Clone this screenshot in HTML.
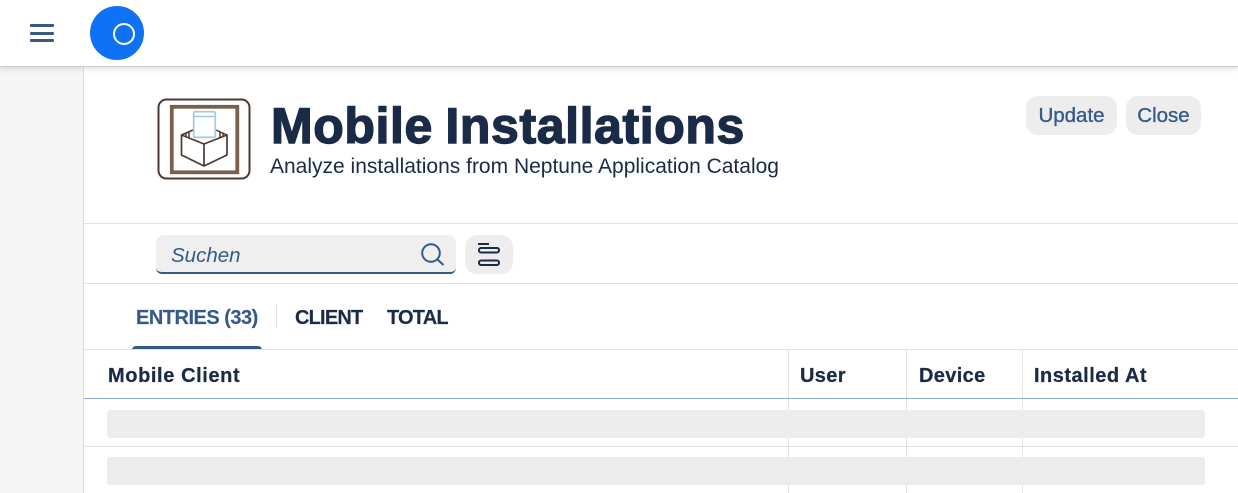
<!DOCTYPE html>
<html><head><meta charset="utf-8"><style>
html,body{margin:0;padding:0;width:1238px;height:493px;overflow:hidden;background:#fff}
body{position:relative;font-family:"Liberation Sans",sans-serif;color:#1a2b47}
.a{position:absolute}
.t{position:absolute;white-space:nowrap;line-height:1}
.l{position:absolute;background:#e2e2e2}
.btn{position:absolute;background:#ededed;border-radius:12px;color:#355a8a;font-size:20.500px;line-height:39px;text-align:center;top:96px;height:39px;-webkit-text-stroke:.35px #355a8a}
.sk{position:absolute;left:107px;width:1098px;height:28px;background:#ececec;border-radius:3px}
.h{font-size:20px;font-weight:700;-webkit-text-stroke:.25px #1a2b47}
.tab{font-size:20px;font-weight:700;top:308px;letter-spacing:-.8px;-webkit-text-stroke:.15px #1a2b47}
</style></head><body>
<div class="a" style="left:0;top:0;width:1238px;height:66px;background:#fff;border-bottom:1px solid #c9ced6;box-shadow:0 2px 5px rgba(120,130,145,.25);z-index:3"></div>
<div class="a" style="left:30px;top:24px;width:24px;height:3px;background:#355a8a;border-radius:1px;z-index:4"></div>
<div class="a" style="left:30px;top:32px;width:24px;height:3px;background:#355a8a;border-radius:1px;z-index:4"></div>
<div class="a" style="left:30px;top:39px;width:24px;height:3px;background:#355a8a;border-radius:1px;z-index:4"></div>
<div class="a" style="left:90px;top:6px;width:54px;height:54px;background:#0f72f5;border-radius:50%;z-index:4"></div>
<div class="a" style="left:113px;top:23px;width:18px;height:18px;border:2px solid #fff;border-radius:50%;z-index:5"></div>

<div class="a" style="left:0;top:67px;width:83px;height:426px;background:#f5f5f5;border-right:1px solid #dcdcdc"></div>

<svg class="a" style="left:157px;top:98px" width="94" height="82" viewBox="0 0 94 82">
<rect x="1.500" y="1.500" width="91" height="79" rx="8" fill="#fff" stroke="#4c3a32" stroke-width="2"/>
<rect x="14.800" y="8.800" width="65.500" height="65.500" fill="none" stroke="#7a604c" stroke-width="3.800"/>
<path d="M24.500 37 L36 32 M70 37 L59 32 M29 35 L29 40 M32 34 L32 41 M63 34 L63 41 M66 35 L66 40" stroke="#4c3a32" stroke-width="1.500" fill="none"/>
<path d="M24.500 37 L47 46 L70 37 L70 57 L47 68 L24.500 57 Z M47 46 L47 68" fill="#fff" stroke="#4c3a32" stroke-width="1.700" stroke-linejoin="round"/>
<rect x="36.700" y="13.700" width="21.600" height="25.600" rx="1.500" fill="#fbfdff" stroke="#a5c6e4" stroke-width="1.700"/>
<path d="M36.700 18.500 H58.300" stroke="#a5c6e4" stroke-width="1.400"/>
</svg>

<div class="t" style="left:271px;top:99px;font-size:50px;font-weight:700;letter-spacing:.6px;word-spacing:-2px;line-height:54px;-webkit-text-stroke:1.400px #1a2b47">Mobile Installations</div>
<div class="t" style="left:270px;top:156px;font-size:21px">Analyze installations from Neptune Application Catalog</div>

<div class="btn" style="left:1026px;width:91px">Update</div>
<div class="btn" style="left:1126px;width:75px">Close</div>

<div class="l" style="left:84px;top:223px;width:1154px;height:1px"></div>
<div class="a" style="left:156px;top:235px;width:300px;height:39px;background:#efefef;border-radius:8px 8px 6px 6px;box-sizing:border-box;border-bottom:2px solid #355a8a"></div>
<div class="t" style="left:171px;top:246px;font-size:20.500px;font-style:italic;color:#355a8a">Suchen</div>
<svg class="a" style="left:420px;top:242px" width="25" height="25" viewBox="0 0 25 25" fill="none" stroke="#355a8a" stroke-width="2"><circle cx="11" cy="11" r="8.800"/><path d="M17.500 17.500 L23.500 23"/></svg>
<div class="a" style="left:465px;top:235px;width:48px;height:39px;background:#ededed;border-radius:12px"></div>
<svg class="a" style="left:477px;top:242px" width="24" height="25" viewBox="0 0 24 25" fill="none" stroke="#1a2b47" stroke-width="2"><path d="M1 2 H12"/><rect x="2" y="6" width="20" height="4.500" rx="2"/><rect x="2" y="18.500" width="20" height="4.500" rx="2"/></svg>

<div class="l" style="left:84px;top:283px;width:1154px;height:1px"></div>
<div class="t tab" style="left:136px;color:#355a8a;letter-spacing:-.5px;-webkit-text-stroke:.15px #355a8a">ENTRIES (33)</div>
<div class="l" style="left:276px;top:304px;width:1px;height:24px"></div>
<div class="t tab" style="left:295px">CLIENT</div>
<div class="t tab" style="left:387px">TOTAL</div>
<div class="a" style="left:132px;top:346px;width:130px;height:4px;background:#355a8a;border-radius:4px 4px 0 0"></div>
<div class="l" style="left:84px;top:349px;width:1154px;height:1px"></div>

<div class="l" style="left:788px;top:350px;width:1px;height:143px"></div>
<div class="l" style="left:906px;top:350px;width:1px;height:143px"></div>
<div class="l" style="left:1022px;top:350px;width:1px;height:143px"></div>
<div class="t h" style="left:108px;top:366px;letter-spacing:.6px">Mobile Client</div>
<div class="t h" style="left:800px;top:366px;letter-spacing:.35px">User</div>
<div class="t h" style="left:919px;top:366px;letter-spacing:.35px">Device</div>
<div class="t h" style="left:1034px;top:366px;letter-spacing:.5px">Installed At</div>
<div class="a" style="left:84px;top:398px;width:1154px;height:1px;background:#8aaedc"></div>
<div class="l" style="left:84px;top:446px;width:1154px;height:1px"></div>
<div class="sk" style="top:410px"></div>
<div class="sk" style="top:457px"></div>
</body></html>
